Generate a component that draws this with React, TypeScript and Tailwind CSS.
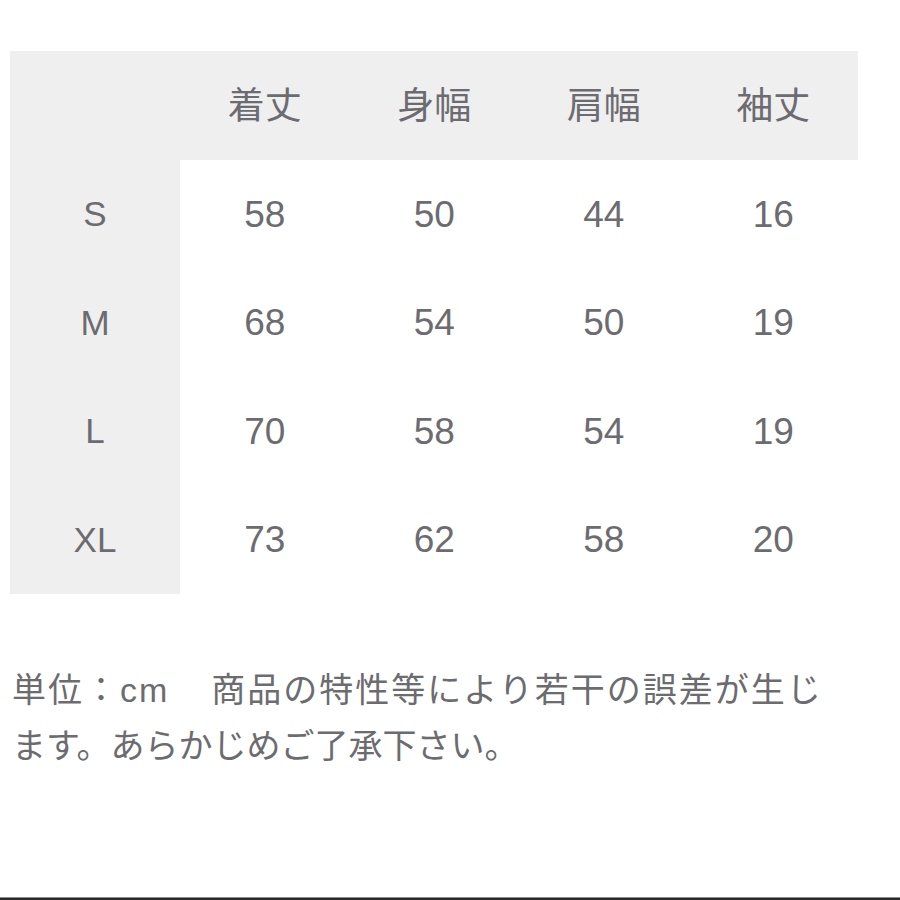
import React from 'react';

const headers = ['着丈', '身幅', '肩幅', '袖丈'];

const rows: { size: string; values: string[] }[] = [
    { size: 'S', values: ['58', '50', '44', '16'] },
    { size: 'M', values: ['68', '54', '50', '19'] },
    { size: 'L', values: ['70', '58', '54', '19'] },
    { size: 'XL', values: ['73', '62', '58', '20'] },
];

const font = { fontFamily: '"Liberation Sans", "Noto Sans CJK JP", sans-serif' };

const App: React.FC = () => {
    return (
        <div className="w-[900px] h-[900px] bg-white flex flex-col text-[#6c6c70]" style={font}>
            <div className="pt-[51px] px-[10px]">
                <div className="grid grid-cols-[170px_repeat(4,169.5px)] grid-rows-[109px_repeat(4,108.5px)]">
                    <div className="bg-[#efeff0]" />
                    {headers.map((h) => (
                        <div
                            key={h}
                            className="bg-[#efeff0] flex items-center justify-center pb-[4px] text-[37px]"
                            style={{ fontFamily: '"Noto Sans CJK JP", sans-serif' }}
                        >
                            {h}
                        </div>
                    ))}
                    {rows.map((row) => (
                        <React.Fragment key={row.size}>
                            <div className="bg-[#efeff0] flex items-center justify-center text-[35px]">
                                {row.size}
                            </div>
                            {row.values.map((v, i) => (
                                <div key={i} className="flex items-center justify-center text-[37px]">
                                    {v}
                                </div>
                            ))}
                        </React.Fragment>
                    ))}
                </div>
            </div>

            {/* first line is justified in the original, so it runs a bit wider */}
            <div
                className="mt-[67px] px-[12px] text-[34px] leading-[54px] whitespace-nowrap"
                style={{ fontFamily: '"Noto Sans CJK JP", sans-serif' }}
            >
                <div className="tracking-[2px]">
                    単位：<span style={font}>cm</span>
                    <span className="inline-block w-[42px]" />
                    商品の特性等により若干の誤差が生じ
                </div>
                <div>ます。あらかじめご了承下さい。</div>
            </div>

            <div className="mt-auto h-[3px] bg-[#2b2b2b] border-t border-[#8a8a8a]" />
        </div>
    );
};

export default App;
